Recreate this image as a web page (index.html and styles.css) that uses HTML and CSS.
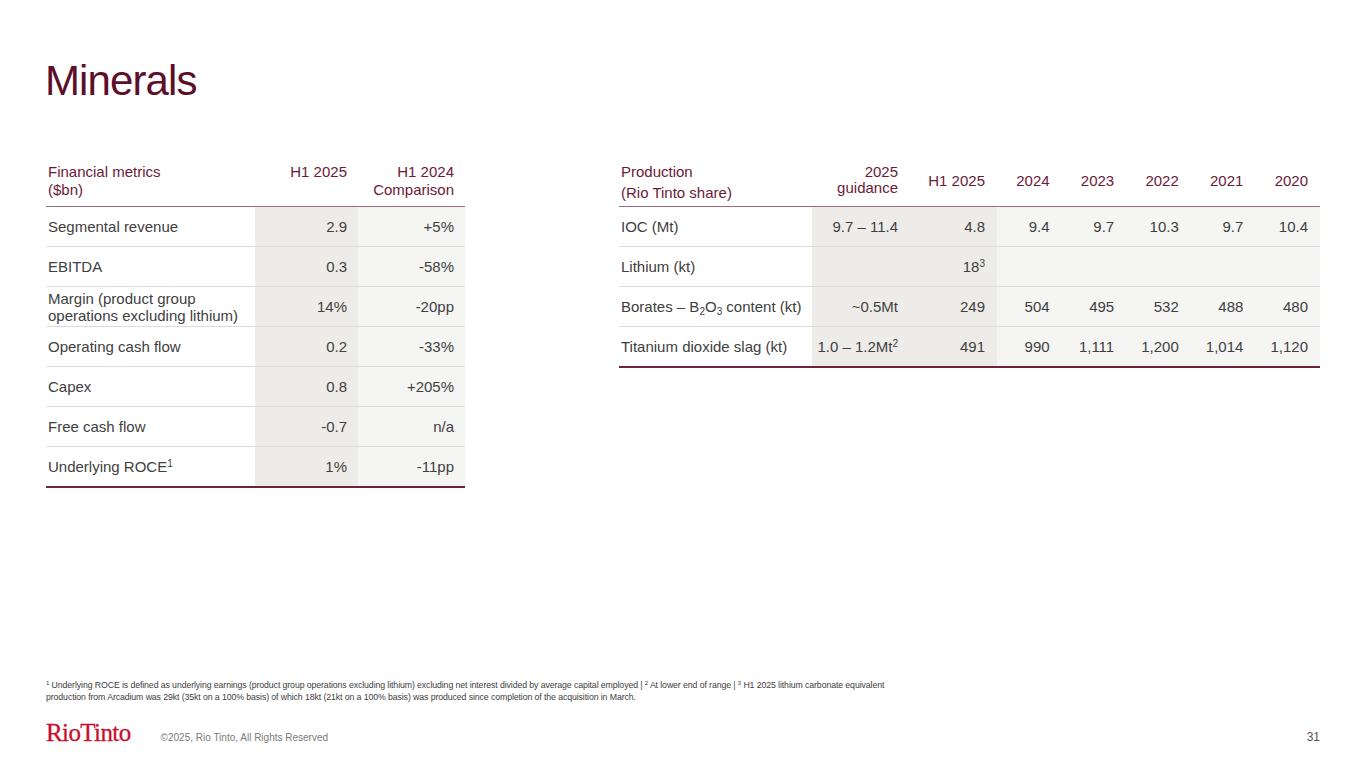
FILE: index.html
```html
<!DOCTYPE html>
<html lang="en">
<head>
<meta charset="utf-8">
<title>Minerals</title>
<link rel="stylesheet" href="styles.css">
</head>
<body>
<div class="slide">
  <h1 class="title">Minerals</h1>
  <div class="tables">
    <table class="tbl fin">
      <colgroup>
        <col class="c-label-l"><col class="c-h1"><col class="c-cmp">
      </colgroup>
      <thead>
        <tr>
          <th class="lbl">Financial metrics<br>($bn)</th>
          <th class="num">H1 2025</th>
          <th class="num">H1 2024<br>Comparison</th>
        </tr>
      </thead>
      <tbody>
        <tr><td class="lbl">Segmental revenue</td><td class="num dark">2.9</td><td class="num light">+5%</td></tr>
        <tr><td class="lbl">EBITDA</td><td class="num dark">0.3</td><td class="num light">-58%</td></tr>
        <tr><td class="lbl two">Margin (product group<br>operations excluding lithium)</td><td class="num dark">14%</td><td class="num light">-20pp</td></tr>
        <tr><td class="lbl">Operating cash flow</td><td class="num dark">0.2</td><td class="num light">-33%</td></tr>
        <tr><td class="lbl">Capex</td><td class="num dark">0.8</td><td class="num light">+205%</td></tr>
        <tr><td class="lbl">Free cash flow</td><td class="num dark">-0.7</td><td class="num light">n/a</td></tr>
        <tr><td class="lbl">Underlying ROCE<sup>1</sup></td><td class="num dark">1%</td><td class="num light">-11pp</td></tr>
      </tbody>
    </table>

    <table class="tbl prod">
      <colgroup>
        <col class="c-label-r"><col class="c-guid"><col class="c-h1r">
        <col class="c-yr"><col class="c-yr"><col class="c-yr"><col class="c-yr"><col class="c-yr">
      </colgroup>
      <thead>
        <tr>
          <th class="lbl"><span class="l1">Production</span><span class="l2">(Rio Tinto share)</span></th>
          <th class="num guid">2025<br>guidance</th>
          <th class="num mid">H1 2025</th>
          <th class="num mid">2024</th>
          <th class="num mid">2023</th>
          <th class="num mid">2022</th>
          <th class="num mid">2021</th>
          <th class="num mid">2020</th>
        </tr>
      </thead>
      <tbody>
        <tr><td class="lbl">IOC (Mt)</td><td class="num dark">9.7 – 11.4</td><td class="num dark">4.8</td><td class="num light">9.4</td><td class="num light">9.7</td><td class="num light">10.3</td><td class="num light">9.7</td><td class="num light">10.4</td></tr>
        <tr><td class="lbl">Lithium (kt)</td><td class="num dark"></td><td class="num dark">18<sup>3</sup></td><td class="num light"></td><td class="num light"></td><td class="num light"></td><td class="num light"></td><td class="num light"></td></tr>
        <tr><td class="lbl">Borates – B<sub>2</sub>O<sub>3</sub> content (kt)</td><td class="num dark">~0.5Mt</td><td class="num dark">249</td><td class="num light">504</td><td class="num light">495</td><td class="num light">532</td><td class="num light">488</td><td class="num light">480</td></tr>
        <tr><td class="lbl">Titanium dioxide slag (kt)</td><td class="num dark">1.0 – 1.2Mt<sup>2</sup></td><td class="num dark">491</td><td class="num light">990</td><td class="num light">1,111</td><td class="num light">1,200</td><td class="num light">1,014</td><td class="num light">1,120</td></tr>
      </tbody>
    </table>
  </div>

  <p class="footnote"><sup>1</sup> Underlying ROCE is defined as underlying earnings (product group operations excluding lithium) excluding net interest divided by average capital employed | <sup>2</sup> At lower end of range | <sup>3</sup> H1 2025 lithium carbonate equivalent production from Arcadium was 29kt (35kt on a 100% basis) of which 18kt (21kt on a 100% basis) was produced since completion of the acquisition in March.</p>

  <footer class="footer">
    <span class="logo">RioTinto</span>
    <span class="copy">©2025, Rio Tinto, All Rights Reserved</span>
    <span class="page">31</span>
  </footer>
</div>
</body>
</html>
```

FILE: styles.css
```css
html, body {
  margin: 0;
  padding: 0;
  background: #ffffff;
}

body {
  font-family: "Liberation Sans", Arial, sans-serif;
  color: #404040;
}

.slide {
  width: 1365px;
  height: 768px;
  box-sizing: border-box;
  padding: 0 45px 0 46px;
  display: flex;
  flex-direction: column;
  overflow: hidden;
}

.title {
  margin: 56px 0 0 -1px;
  font-size: 42px;
  font-weight: normal;
  line-height: 50px;
  letter-spacing: -0.9px;
  color: #5c0f2a;
}

.tables {
  display: flex;
  align-items: flex-start;
  gap: 154px;
  margin-top: 54px;
}

.tbl {
  border-collapse: collapse;
  table-layout: fixed;
  font-size: 15px;
}

.fin { width: 419px; }
.prod { width: 701px; }

.c-label-l { width: 209px; }
.c-h1 { width: 103px; }
.c-cmp { width: 107px; }

.c-label-r { width: 193px; }
.c-guid { width: 98px; }
.c-h1r { width: 87px; }
.c-yr { width: 64.6px; }

.tbl th {
  font-weight: normal;
  color: #6b1a38;
  line-height: 18px;
  vertical-align: top;
  padding: 3px 11px 7px 2px;
  height: 36px;
  border-bottom: 1px solid #9c6b7c;
}

.tbl th.lbl { text-align: left; }
.tbl th.num { text-align: right; }
.tbl th.mid { vertical-align: middle; }
.prod th.num { padding-right: 12px; }
.prod th.guid { line-height: 16px; padding-top: 4px; padding-bottom: 6px; }
.prod th.lbl { padding-bottom: 2px; }

.prod th .l1, .prod th .l2 { display: block; }
.prod th .l2 { margin-top: 3px; }

.tbl td {
  height: 39px;
  padding: 0 11px 0 2px;
  border-bottom: 1px solid #dcdcdc;
  vertical-align: middle;
  white-space: nowrap;
  color: #404040;
}

.prod td.num { padding-right: 12px; }

.tbl td.lbl { text-align: left; }
.tbl td.two { line-height: 17px; }
.tbl td.num { text-align: right; }

.tbl td.dark { background: #eeece9; }
.tbl td.light { background: #f5f5f4; }

.tbl tbody tr:last-child td {
  border-bottom: 2px solid #6e2340;
}

sup {
  font-size: 10px;
  line-height: 0;
  vertical-align: 5px;
}

sub {
  font-size: 10px;
  line-height: 0;
  vertical-align: -3px;
}

.footnote {
  margin: auto 0 0 0;
  font-size: 8.75px;
  line-height: 12px;
  color: #404040;
  width: 850px;
  letter-spacing: -0.1px;
}

.footnote sup {
  font-size: 6px;
  vertical-align: 3px;
}

.footer {
  display: flex;
  align-items: flex-end;
  margin-top: 17px;
  margin-bottom: 24px;
  height: 24px;
}

.logo {
  font-family: "Liberation Serif", "Times New Roman", serif;
  font-size: 25px;
  line-height: 22px;
  color: #c8102e;
  letter-spacing: -0.6px;
  font-weight: normal;
  -webkit-text-stroke: 0.3px #c8102e;
}

.copy {
  margin-left: 30px;
  font-size: 10px;
  line-height: 12px;
  color: #7a7a7a;
}

.page {
  margin-left: auto;
  font-size: 12px;
  line-height: 14px;
  color: #555555;
}
```
